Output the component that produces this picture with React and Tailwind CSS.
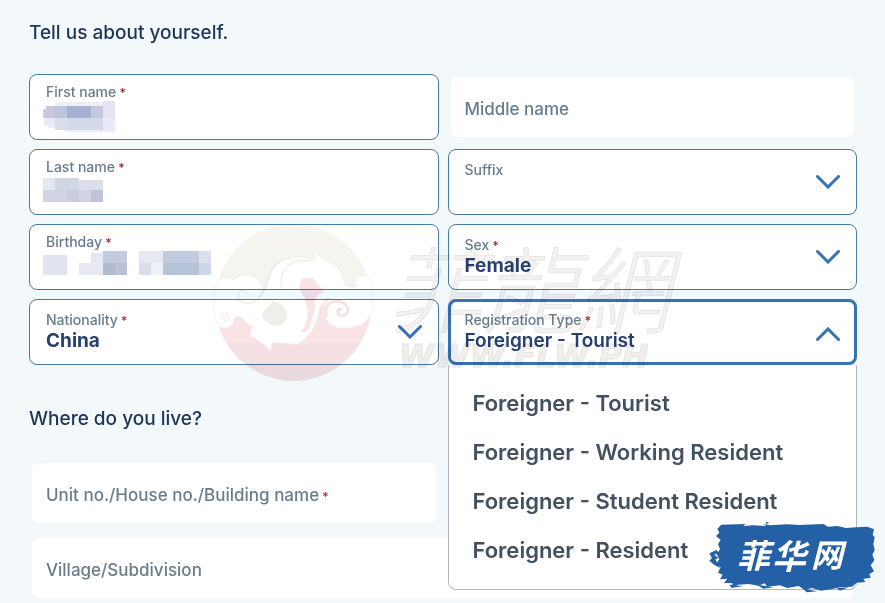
import React from "react";

const Star = () => <span className="text-xs text-[#b3262e]"> *</span>;

function Chevron({ up = false }) {
  return (
    <svg viewBox="0 0 24 14" aria-hidden="true" className="pointer-events-none h-[14px] w-6 shrink-0" fill="none" stroke="#3572b8" strokeWidth="3" strokeLinecap="round" strokeLinejoin="miter">
      <path d={up ? "M1.5 12.5 12 2 22.5 12.5" : "M1.5 1.5 12 12 22.5 1.5"} />
    </svg>
  );
}

/* Colour blocks hiding a value; each cell is [x, y, width, height, colour]. */
function Redaction({ cells, width, height }) {
  return (
    <svg aria-hidden="true" width={width} height={height} viewBox={`0 0 ${width} ${height}`} className="pointer-events-none absolute top-[26px] left-[13px]">
      {cells.map(([x, y, w, h, c], i) => (
        <rect key={i} x={x} y={y} width={w} height={h} fill={c} />
      ))}
    </svg>
  );
}

const firstCells = [
  [12, 1, 48, 4, "#eeeef5"], [60, 0, 12, 17, "#e4e5f0"],
  [3, 5, 9, 12, "#c5c8dd"], [0, 8, 3, 9, "#c9cce0"], [12, 5, 12, 12, "#bfc4dd"], [24, 5, 24, 12, "#a5b0d3"], [48, 5, 12, 12, "#c4c9df"],
  [1, 17, 11, 7, "#e9ebf4"], [5, 24, 7, 3, "#eceef5"], [12, 17, 12, 12, "#dadeec"], [24, 17, 36, 12, "#d3daea"], [60, 17, 12, 14, "#e9eaf5"], [22, 29, 38, 2, "#eeeef6"],
];
const lastCells = [
  [0, 2, 12, 12, "#e5e7f0"], [12, 2, 24, 12, "#cfd7e5"], [36, 4, 24, 10, "#dbdfea"],
  [0, 14, 24, 12, "#d2d4e4"], [24, 14, 12, 12, "#c9cbdf"], [36, 14, 12, 12, "#d1d4e3"], [48, 14, 12, 12, "#c0c3da"],
];
const birthCells = [
  [0, 4, 24, 20, "#e0e4ef"], [36, 12, 24, 12, "#e7e9f4"], [48, 2, 12, 10, "#e5e8f2"], [60, 0, 24, 12, "#c5cbdf"], [60, 12, 12, 12, "#b2b9d1"], [72, 12, 12, 12, "#bbc2d7"],
  [96, 0, 24, 12, "#e7e9f2"], [96, 12, 12, 12, "#d9dce9"], [108, 12, 12, 12, "#edf0f7"], [120, 0, 36, 12, "#c2cae0"], [120, 12, 36, 12, "#b6c4da"], [156, 0, 12, 12, "#dce0ee"], [156, 12, 12, 12, "#ccd8e9"],
];

function TextField({ id, label, cells, width, height }) {
  return (
    <div className="relative flex h-[66px] flex-col rounded-lg border border-[#4a7a9e] bg-white px-4 pt-2">
      <label htmlFor={id} className="text-sm leading-[18px] font-medium text-[#687c8c]">{label}<Star /></label>
      <input id={id} className="w-full flex-1 bg-transparent text-[19px] text-[#28406f] outline-none" />
      <Redaction cells={cells} width={width} height={height} />
    </div>
  );
}

function SelectField({ id, label, required, value, options }) {
  return (
    <div className="flex h-[66px] items-center rounded-lg border border-[#4a7a9e] bg-white px-4">
      <div className="flex h-full min-w-0 flex-1 flex-col pt-[11px]">
        <label htmlFor={id} className="text-sm leading-[18px] font-medium text-[#687c8c]">{label}{required && <Star />}</label>
        <select id={id} defaultValue={value} className="h-6 w-full appearance-none bg-transparent text-[19px] leading-6 font-bold text-[#28406f] outline-none">
          {options.map((o) => <option key={o} value={o}>{o}</option>)}
        </select>
      </div>
      <Chevron />
    </div>
  );
}

function EmptyField({ id, label, required }) {
  return (
    <div className="flex h-[66px] min-w-0 p-[3px]">
      <div className="flex min-w-0 flex-1 items-center rounded-md bg-white px-[14px] pt-1">
        <label htmlFor={id} className="shrink-0 text-[17px] leading-6 font-medium text-[#687c8c]">
          {label}{required && <Star />}
        </label>
        <input id={id} className="h-full w-0 min-w-0 flex-1 bg-transparent text-[17px] outline-none" />
      </div>
    </div>
  );
}

const types = ["Foreigner - Tourist", "Foreigner - Working Resident", "Foreigner - Student Resident", "Foreigner - Resident"];

function RegistrationField() {
  return (
    <div className="relative h-[66px]">
      <button type="button" aria-haspopup="listbox" aria-expanded="true" aria-labelledby="reg-label reg-value" className="flex h-full w-full items-center rounded-lg border-3 border-[#3572b8] bg-white px-[14px] text-left">
        <span className="flex h-full flex-1 flex-col pt-[9px]">
          <span id="reg-label" className="text-sm leading-[18px] font-medium text-[#687c8c]">Registration Type<Star /></span>
          <span id="reg-value" className="text-[19px] leading-6 font-semibold text-[#28406f]">Foreigner - Tourist</span>
        </span>
        <span className="pt-1"><Chevron up /></span>
      </button>
      <ul role="listbox" aria-labelledby="reg-label" className="absolute inset-x-0 top-full z-10 rounded-b-lg border border-t-0 border-[#b4b8bd] bg-white px-6 pt-[14px] pb-[14px]">
        {types.map((t, i) => (
          <li key={t} role="option" aria-selected={i === 0} className="py-[11px] text-[22px] leading-[27px] font-semibold text-[#42505f]">{t}</li>
        ))}
      </ul>
    </div>
  );
}

function Watermark() {
  return (
    <svg aria-hidden="true" viewBox="200 215 490 180" className="pointer-events-none absolute top-[215px] left-[200px] z-20 h-[180px] w-[490px] mix-blend-multiply">
      <defs>
        <linearGradient id="disc" x1="0" y1="0" x2="0" y2="1">
          <stop offset="0" stopColor="#f6f6ef" />
          <stop offset="1" stopColor="#f2f2ed" />
        </linearGradient>
        <clipPath id="round"><circle cx="280" cy="262" r="235" /></clipPath>
      </defs>
      <g transform="translate(200 215) scale(.33333)">
        <circle cx="280" cy="262" r="235" fill="url(#disc)" />
        <g clipPath="url(#round)">
          <path d="M30 290H530V510H30Z" fill="#f9e3e5" />
          <path d="M30 385H530V510H30Z" fill="#f1dde2" opacity=".5" />
        </g>
        <path d="M40 278C48 260 38 246 46 220C50 190 82 178 102 196C124 172 166 176 180 202C190 220 188 238 174 246C190 240 198 218 208 190C218 156 236 134 266 132C292 122 320 126 346 136L340 107C362 132 388 137 407 154C428 171 426 190 435 207C446 218 462 218 472 214C462 202 466 182 482 182C502 178 522 200 516 248C528 300 496 332 460 336C420 346 384 334 376 306C366 284 374 258 396 250C382 244 366 256 358 286C352 332 334 362 292 388C276 388 232 382 216 384L212 407C198 390 178 380 166 370C144 366 150 346 160 336C138 332 132 306 118 306C104 300 102 314 100 324C88 346 54 342 50 326Z" fill="#fff" stroke="#eeecea" strokeWidth="2" />
        <path d="M298 214C296 184 336 178 350 202C354 216 370 218 372 230C354 238 342 250 343 266C350 280 338 294 330 340C322 350 312 350 302 352C328 316 326 290 316 260C314 240 300 236 298 214Z" fill="#f9e3e5" />
        <path d="M358 286C352 332 334 362 292 388L310 392C340 364 364 330 376 306C370 292 370 276 380 262C368 268 362 276 358 286Z" fill="#f9e3e5" />
        <path d="M218 260C204 284 188 286 189 304C198 322 218 334 236 330C260 322 264 298 254 282C246 268 232 264 218 260Z" fill="#efefe9" stroke="#e4e3e1" strokeWidth="2" />
        <g fill="none" stroke="#e6e4e2" strokeWidth="3" strokeLinecap="round">
          <path d="M120 258C154 278 184 252 194 222C212 168 218 140 256 132M244 210C240 150 280 132 328 136M118 258C104 226 130 216 148 240" />
          <path d="M380 302C368 270 400 248 430 264C452 278 446 304 424 302C408 298 410 280 424 282" stroke="#f7dfe2" strokeWidth="8" />
          <path d="M66 312C60 294 84 288 86 308C84 324 70 320 72 310" />
        </g>
      </g>
      <text x="388" y="326" fontSize="94" fontStyle="italic" fontWeight="300" fill="#f3f2f1" stroke="#e9e7e6" strokeWidth="1" className="font-['Noto_Sans_CJK_TC',sans-serif]">菲龍網</text>
      <text x="399" y="367" fontSize="32" fontStyle="italic" fontWeight="700" fill="#f1efee" stroke="#e7e4e2" strokeWidth="1" className="font-['DejaVu_Sans',sans-serif]">WWW.FLW.PH</text>
    </svg>
  );
}

function Badge() {
  return (
    <svg role="img" aria-label="菲华网" viewBox="0 0 195 103" className="pointer-events-none absolute top-[500px] right-0 z-30 h-[103px] w-[195px]">
      <g transform="scale(.33333)" fill="#2460a6">
        <path d="M94 74L166 72L160 78L190 76L228 78L222 72L240 76L290 73L330 75L400 72L414 80L442 78L468 84L500 82L532 80L552 88L548 104L554 112L550 132L554 150L547 164L553 180L542 196L552 214L538 222L542 234L520 236L526 246L500 248L486 260L450 262L424 268L392 272L366 264L344 270L326 258L292 264L270 256L232 260L224 250L206 257L176 252L142 254L124 262L128 250L102 248L112 236L90 238L98 224L84 218L92 202L78 192L88 178L80 162L90 148L84 132L92 120L78 108L88 98L82 86Z" />
        <path d="M58 160L80 150L86 160L72 164L86 174L76 178L90 204L72 194L58 182L66 174Z" />
        <path d="M226 65L238 68L230 72ZM118 254L160 258L124 264ZM340 266L382 274L350 277ZM200 254L250 262L220 266ZM440 264L476 262L450 272Z" />
      </g>
      <g fill="#fff" fontWeight="700" fontStyle="italic" className="font-['Noto_Sans_CJK_SC',sans-serif]">
        <text x="47" y="68" fontSize="33">菲</text>
        <text x="82" y="69" fontSize="34">华</text>
        <text x="121" y="67" fontSize="32">网</text>
      </g>
    </svg>
  );
}

export default function App() {
  return (
    <div className="relative min-h-screen w-full overflow-hidden bg-[#f3f8fb] px-7 font-['Inter','Noto_Sans_CJK_SC',sans-serif]">
      <form className="pl-px">
        <h2 className="pt-5 text-[19px] leading-[26px] font-medium text-[#1d3557]">Tell us about yourself.</h2>
        <div className="mt-7 grid grid-cols-2 gap-[9px]">
          <TextField id="first" label="First name" cells={firstCells} width={72} height={31} />
          <EmptyField id="middle" label="Middle name" />
          <TextField id="last" label="Last name" cells={lastCells} width={60} height={26} />
          <SelectField id="suffix" label="Suffix" value="" options={["", "Jr.", "Sr."]} />
          <TextField id="birthday" label="Birthday" cells={birthCells} width={168} height={24} />
          <SelectField id="sex" label="Sex" required value="Female" options={["Female", "Male"]} />
          <SelectField id="nationality" label="Nationality" required value="China" options={["China", "Philippines"]} />
          <RegistrationField />
        </div>
        <h2 className="mt-[41px] text-[19px] leading-[26px] font-medium text-[#1d3557]">Where do you live?</h2>
        <div className="mt-7 grid grid-cols-2 gap-[9px]">
          <EmptyField id="unit" label="Unit no./House no./Building name" required />
          <div className="col-span-2">
            <EmptyField id="village" label="Village/Subdivision" />
          </div>
        </div>
      </form>
      <Watermark />
      <Badge />
    </div>
  );
}
